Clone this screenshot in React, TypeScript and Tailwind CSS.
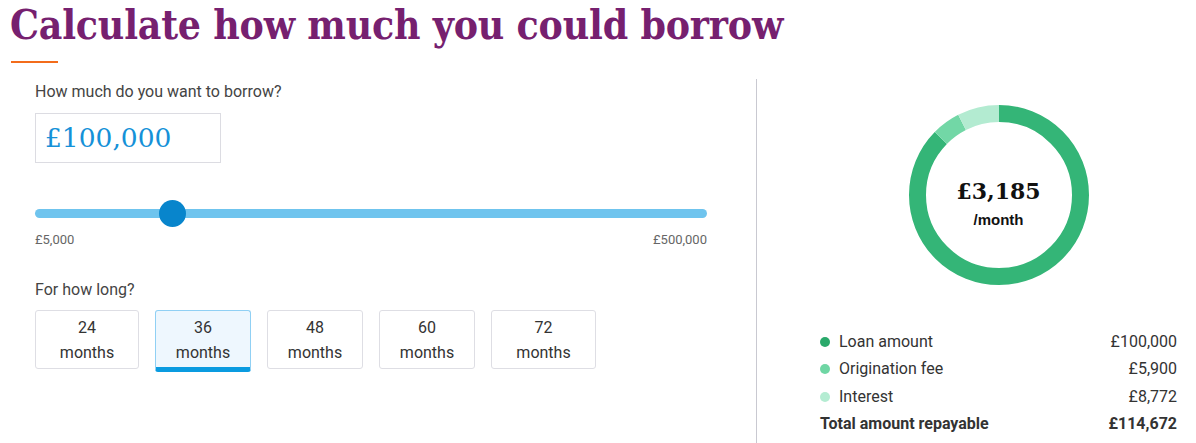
import React from "react"
import clsx from "clsx"

const terms = [
  { months: 24, width: "w-[104px]" },
  { months: 36, width: "w-[96px]" },
  { months: 48, width: "w-[96px]" },
  { months: 60, width: "w-[96px]" },
  { months: 72, width: "w-[105px]" },
]

const breakdown = [
  { label: "Loan amount", value: 100000, dot: "bg-[#2aa96b]", stroke: "#34b577" },
  { label: "Origination fee", value: 5900, dot: "bg-[#6fd6a4]", stroke: "#72d7a6" },
  { label: "Interest", value: 8772, dot: "bg-[#b4ecd2]", stroke: "#b3ebd1" },
]

const fmt = (n: number) => "£" + n.toLocaleString("en-GB")

const Donut = () => {
  const r = 81.5
  const c = 2 * Math.PI * r
  const total = breakdown.reduce((s, b) => s + b.value, 0)
  let offset = 0

  return (
    <div className="relative w-[182px] h-[182px]">
      <svg width="182" height="182" viewBox="0 0 182 182" className="-rotate-90">
        {breakdown.map((b) => {
          const len = (b.value / total) * c
          const seg = (
            <circle
              key={b.label}
              cx="91"
              cy="91"
              r={r}
              fill="none"
              stroke={b.stroke}
              strokeWidth="17"
              strokeDasharray={`${len} ${c - len}`}
              strokeDashoffset={-offset}
            />
          )
          offset += len
          return seg
        })}
      </svg>
      <div className="absolute inset-0 flex flex-col items-center pt-[73px]">
        <span className="font-['DejaVu_Serif',serif] font-bold text-[22px] leading-[28px] text-[#111]">
          £3,185
        </span>
        <span className="mt-[4px] font-['Liberation_Sans',Arial,sans-serif] font-bold text-[15px] leading-[22px] text-[#111]">
          /month
        </span>
      </div>
    </div>
  )
}

export default function App() {
  const selected = 36

  return (
    <div className="w-[1196px] h-[443px] overflow-hidden bg-white font-['Roboto',sans-serif]">
      <h1 className="pl-[10px] pt-[1px] font-['DejaVu_Serif',serif] [font-stretch:condensed] font-bold text-[40.5px] leading-[48px] text-[#76206f] tracking-[-0.2px]">
        Calculate how much you could borrow
      </h1>
      <div className="ml-[11px] mt-[12px] w-[47px] h-[2px] bg-[#f36c1b]" />

      <div className="flex mt-[16px] h-[364px]">
        {/* left: amount + term */}
        <div className="w-[757px] border-r border-[#c9c9d1] pl-[35px] pr-[49px] pt-[3px]">
          <p className="text-[16px] leading-[20px] text-[#444]">How much do you want to borrow?</p>
          <div className="mt-[11px] w-[186px] h-[50px] border border-[#dcdce2] flex items-center pl-[9px]">
            <span className="font-['DejaVu_Serif',serif] text-[26.5px] leading-[34px] text-[#1591d8]">
              £100,000
            </span>
          </div>

          <div className="relative mt-[37px] h-[27px] flex items-center">
            <div className="w-full h-[9px] rounded-full bg-[#6fc4ee]" />
            <div className="absolute left-[124px] top-0 w-[27px] h-[27px] rounded-full bg-[#0885cc]" />
          </div>
          <div className="mt-[5px] flex justify-between text-[13px] leading-[16px] text-[#666]">
            <span>£5,000</span>
            <span>£500,000</span>
          </div>

          <p className="mt-[32px] text-[16px] leading-[20px] text-[#444]">For how long?</p>
          <div className="mt-[10px] flex items-start gap-[16px]">
            {terms.map((t) => (
              <button
                key={t.months}
                className={clsx(
                  "flex flex-col items-center py-[4px] rounded-[3px] border text-[16px] leading-[25px] text-[#333]",
                  t.width,
                  t.months === selected
                    ? "bg-[#eef7fe] border-[#90d0f4] border-b-[5px] border-b-[#0a9be0] h-[62px]"
                    : "border-[#dedee4] h-[59px]"
                )}
              >
                <span>{t.months}</span>
                <span>months</span>
              </button>
            ))}
          </div>
        </div>

        {/* right: repayment summary */}
        <div className="flex-1 pl-[63px] pr-[19px] pt-[25px] flex flex-col items-center">
          <Donut />
          <div className="mt-[42px] w-full text-[16px] text-[#333]">
            {breakdown.map((b) => (
              <div key={b.label} className="flex items-center h-[27.5px]">
                <span className={clsx("w-[10px] h-[10px] rounded-full mr-[9px]", b.dot)} />
                <span className="flex-1">{b.label}</span>
                <span>{fmt(b.value)}</span>
              </div>
            ))}
            <div className="flex items-center h-[27.5px] font-bold">
              <span className="flex-1">Total amount repayable</span>
              <span>£114,672</span>
            </div>
          </div>
        </div>
      </div>
    </div>
  )
}
